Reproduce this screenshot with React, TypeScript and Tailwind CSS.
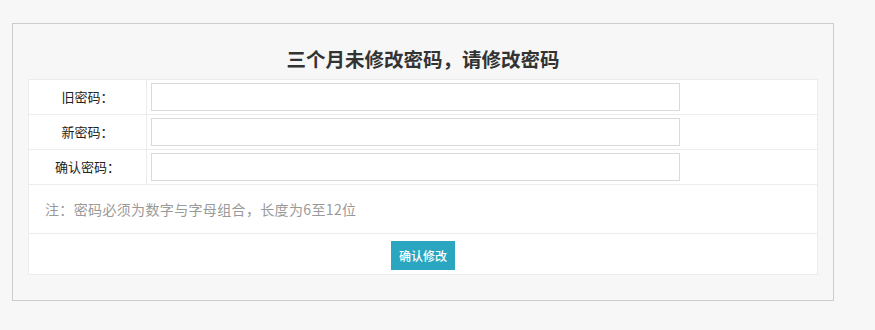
const fontStack = "font-['Noto_Sans_CJK_SC','Noto_Sans',sans-serif]";

const rows = ["旧密码：", "新密码：", "确认密码："];

export default function App() {
  return (
    <div className={`${fontStack} bg-[#f7f7f7] w-full h-[330px] pt-[23px] pl-[12px]`}>
      <div className="w-[822px] h-[278px] border border-[#cccccc] bg-[#f7f7f7] px-[15px]">
        <h2 className="pt-[21px] pb-[6px] text-center text-[19.5px] leading-[28px] font-bold text-[#333333]">
          三个月未修改密码，请修改密码
        </h2>
        <div className="w-[790px] border border-[#ececec] bg-white">
          {rows.map((label) => (
            <div key={label} className="flex h-[35px] border-b border-[#ececec]">
              <div className="w-[118px] border-r border-[#ececec] flex items-center justify-center text-[13px] text-[#222222]">
                {label}
              </div>
              <div className="flex items-center pl-[4px]">
                <input
                  type="password"
                  className="w-[529px] h-[28px] border border-[#dadada] bg-white outline-none"
                />
              </div>
            </div>
          ))}
          <div className="h-[49px] border-b border-[#ececec] flex items-center pl-[16px] text-[14px] tracking-[0.35px] text-[#999999]">
            注：密码必须为数字与字母组合，长度为6至12位
          </div>
          <div className="h-[40px] flex justify-center pt-[7px]">
            <button className="w-[64px] h-[29px] bg-[#2aa6c1] text-white text-[12px] leading-none font-medium">
              确认修改
            </button>
          </div>
        </div>
      </div>
    </div>
  );
}
